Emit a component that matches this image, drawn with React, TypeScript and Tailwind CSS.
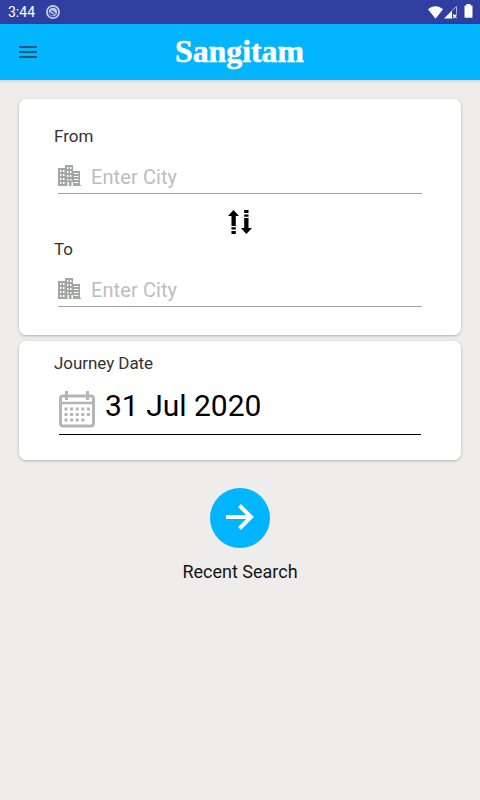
import React from 'react';

const BuildingsIcon = () => (
  <svg width="23" height="23" viewBox="0 0 23 23" fill="none">
    <path fill="#a3a5a0" fillRule="evenodd" d="M0 4h7V1h8v6h7v14h1v1h-8v-4h-1.500v4H11v-4H9.500v4H0zM2 6v2h1.500V6zM5 6v2h1.500V6zM2 10v2h1.500v-2zM5 10v2h1.500v-2zM2 14v2h1.500v-2zM5 14v2h1.500v-2zM2 18v2h1.500v-2zM5 18v2h1.500v-2zM9 3v2h1.500V3zM12 3v2h1.500V3zM9 7v2h1.500V7zM12 7v2h1.500V7zM9 11v2h1.500v-2zM12 11v2h1.500v-2zM9 15v1.500h1.500V15zM12 15v1.500h1.500V15zM16 9v1h4.500V9zM16 12v1h4.500v-1zM16 15v1h4.500v-1zM16 18v1h4.500v-1z" />
  </svg>
);

const SwapIcon = () => (
  <svg width="24" height="25" viewBox="0 0 24 25" fill="#000">
    <path d="M5.500 0l5.500 6H7.800v10h-4.300V6H0zM3.500 17.300h4.300v2.200H3.500zM3.500 21h4.300v3H3.500z" />
    <path d="M18.300 24l5.700-6h-3.500V8h-4.300v10H13zM16.200 4.500h4.300v2.200h-4.300zM16.200 0h4.300v3h-4.300z" />
  </svg>
);

const CalendarIcon = () => (
  <svg width="36" height="37" viewBox="0 0 36 37" fill="none">
    <rect x="1.500" y="5" width="33" height="30" rx="2.500" stroke="#b5b5b5" strokeWidth="3" />
    <path d="M1 12h34" stroke="#b5b5b5" strokeWidth="2.500" />
    <path d="M7.500 0v9M28.500 0v9" stroke="#b5b5b5" strokeWidth="3" />
    <path d="M5.500 18h26M5.500 23.500h26M5.500 29h20" stroke="#b5b5b5" strokeWidth="3" strokeDasharray="3 2.600" />
  </svg>
);

const StatusBar = () => (
  <div className="flex h-6 items-center bg-[#303f9f] pl-2 pr-[7px] text-white">
    <span className="text-[14px] leading-6">3:44</span>
    <svg className="ml-[11px]" width="14" height="14" viewBox="0 0 14 14" fill="none">
      <circle cx="7" cy="7" r="6.100" stroke="#c5c9e8" strokeWidth="1.800" />
      <circle cx="7" cy="7" r="4.200" fill="#c5c9e8" />
      <path d="M4 7.500q.5 2.500 3.500 2.500M5.500 5.500l4 3.500" stroke="#303f9f" strokeWidth="1.400" />
    </svg>
    <svg className="ml-auto" width="15" height="13" viewBox="0 0 15 13">
      <path fill="#fff" d="M0 3.200C4.500-.7 10.500-.7 15 3.200L7.500 12.700z" />
    </svg>
    <svg className="ml-[1px]" width="14" height="13" viewBox="0 0 14 13" fill="none">
      <path fill="#fff" d="M0 12.500L8 4.500v8z" />
      <path d="M7.500 5l5-4.500v7" stroke="#aeb4df" strokeWidth="1" />
      <path d="M9 8.500l3.500 3.500M12.500 8.500L9 12" stroke="#fff" strokeWidth="1.200" />
    </svg>
    <svg className="-mt-[2px] ml-[6px]" width="9" height="14" viewBox="0 0 9 14">
      <path fill="#fff" d="M2.500 0h4v1.500H8q.5 0 .5.500v11q0 .7-.7.700H1.200q-.7 0-.7-.7V2q0-.5.500-.5h1.500z" />
    </svg>
  </div>
);

const Header = () => (
  <header className="relative z-10 grid h-14 grid-cols-[48px_1fr_48px] items-center bg-[#02b5fe] shadow-[0_1px_3px_rgba(0,0,0,0.15)]">
    <button className="pl-[19px]" aria-label="Menu">
      <svg width="18" height="12" viewBox="0 0 18 12" fill="#07577a">
        <path d="M0 0h18v2H0zM0 5h18v2H0zM0 10h18v2H0z" />
      </svg>
    </button>
    <svg className="mx-auto" width="132" height="36" viewBox="0 0 132 36">
      <text
        x="1"
        y="28"
        textLength="129"
        lengthAdjust="spacingAndGlyphs"
        fill="#fff"
        stroke="#fff"
        strokeWidth="0.500"
        className="font-['Liberation_Serif',serif] text-[31px] font-bold"
      >
        Sangitam
      </text>
    </svg>
  </header>
);

interface CityFieldProps {
  label: string;
}

const CityField: React.FC<CityFieldProps> = ({ label }) => (
  <div>
    <div className="text-[17px] leading-5 text-[#333]">{label}</div>
    <div className="ml-1 mt-[14px] flex h-[34px] items-center border-b border-[#a0a0a0]">
      <div className="mb-[2px]">
        <BuildingsIcon />
      </div>
      <span className="ml-[10px] text-[20px] leading-6 tracking-[0.1px] text-[#bdbdbd]">Enter City</span>
    </div>
  </div>
);

const App: React.FC = () => {
  return (
    <div className="flex h-[800px] w-[480px] flex-col overflow-hidden bg-[#eeedec] font-[Roboto,sans-serif]">
      <StatusBar />
      <Header />
      <main className="flex flex-col px-[19px] pt-[19px]">
        <section className="h-[236px] rounded-[7px] bg-white pl-[35px] pr-[39px] pt-[27px] shadow-[0_1px_3px_rgba(0,0,0,0.25)]">
          <CityField label="From" />
          <div className="mb-1 ml-[174px] mt-4 h-[25px]">
            <SwapIcon />
          </div>
          <CityField label="To" />
        </section>

        <section className="mt-[6px] h-[119px] rounded-[7px] bg-white pl-[35px] pr-10 pt-3 shadow-[0_1px_3px_rgba(0,0,0,0.25)]">
          <div className="text-[17px] leading-5 tracking-[-0.06px] text-[#333]">Journey Date</div>
          <div className="ml-[5px] mt-3 flex h-[50px] border-b border-black">
            <div className="pt-[6px]">
              <CalendarIcon />
            </div>
            <span className="ml-[10px] mt-[3px] text-[30px] leading-9 text-black">31 Jul 2020</span>
          </div>
        </section>

        <div className="mt-7 flex flex-col items-center">
          <button className="flex size-[60px] items-center justify-center rounded-full bg-[#02b5fe] pb-[2px]" aria-label="Search">
            <svg width="28" height="26" viewBox="0 0 28 26" fill="none">
              <path d="M0 13h25M13.500 1.500L25 13l-11.500 11.500" stroke="#fff" strokeWidth="4" />
            </svg>
          </button>
          <span className="mt-[14px] text-[18px] leading-5 text-[#151515]">Recent Search</span>
        </div>
      </main>
    </div>
  );
};

export default App;
